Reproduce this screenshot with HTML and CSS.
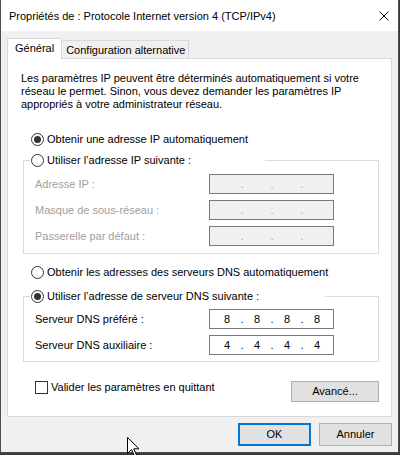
FILE: index.html
```html
<!doctype html>
<html lang="fr">
<head>
  <meta charset="UTF-8" />
  <meta name="viewport" content="width=device-width, initial-scale=1.0" />
  <title>Propriétés de : Protocole Internet version 4 (TCP/IPv4)</title>
  <link rel="stylesheet" href="styles.css">
</head>
<body>
  <div class="window">
    <header class="titlebar">
      <span class="title">Propriétés de : Protocole Internet version 4 (TCP/IPv4)</span>
      <svg class="close" width="10" height="10" viewBox="0 0 10 10">
        <path d="M0.5 0.5 L9.5 9.5 M9.5 0.5 L0.5 9.5" stroke="#000" stroke-width="1" fill="none" />
      </svg>
    </header>

    <div class="content">
      <nav class="tabs">
        <div class="tab active">Général</div>
        <div class="tab">Configuration alternative</div>
      </nav>

      <section class="panel">
        <p class="intro">
          Les paramètres IP peuvent être déterminés automatiquement si votre<br>
          réseau le permet. Sinon, vous devez demander les paramètres IP<br>
          appropriés à votre administrateur réseau.
        </p>

        <label class="radio first checked"><span class="circle"></span>Obtenir une adresse IP automatiquement</label>

        <fieldset class="group ip-group">
          <legend class="legend-ip">
            <label class="radio"><span class="circle"></span>Utiliser l’adresse IP suivante :</label>
          </legend>
          <div class="field disabled">
            <span class="label">Adresse IP :</span>
            <div class="ip">
              <span class="seg"></span><span class="dot">.</span><span class="seg"></span><span class="dot">.</span><span class="seg"></span><span class="dot">.</span><span class="seg"></span>
            </div>
          </div>
          <div class="field disabled">
            <span class="label">Masque de sous-réseau :</span>
            <div class="ip">
              <span class="seg"></span><span class="dot">.</span><span class="seg"></span><span class="dot">.</span><span class="seg"></span><span class="dot">.</span><span class="seg"></span>
            </div>
          </div>
          <div class="field disabled">
            <span class="label">Passerelle par défaut :</span>
            <div class="ip">
              <span class="seg"></span><span class="dot">.</span><span class="seg"></span><span class="dot">.</span><span class="seg"></span><span class="dot">.</span><span class="seg"></span>
            </div>
          </div>
        </fieldset>

        <label class="radio dns-auto"><span class="circle"></span>Obtenir les adresses des serveurs DNS automatiquement</label>

        <fieldset class="group dns-group">
          <legend class="legend-dns">
            <label class="radio checked"><span class="circle"></span>Utiliser l’adresse de serveur DNS suivante :</label>
          </legend>
          <div class="field">
            <span class="label">Serveur DNS préféré :</span>
            <div class="ip">
              <span class="seg">8</span><span class="dot">.</span><span class="seg">8</span><span class="dot">.</span><span class="seg">8</span><span class="dot">.</span><span class="seg">8</span>
            </div>
          </div>
          <div class="field">
            <span class="label">Serveur DNS auxiliaire :</span>
            <div class="ip">
              <span class="seg">4</span><span class="dot">.</span><span class="seg">4</span><span class="dot">.</span><span class="seg">4</span><span class="dot">.</span><span class="seg">4</span>
            </div>
          </div>
        </fieldset>

        <div class="options">
          <label class="check"><span class="box"></span>Valider les paramètres en quittant</label>
          <button class="btn advanced">Avancé...</button>
        </div>
      </section>

      <div class="actions">
        <button class="btn default">OK</button>
        <button class="btn">Annuler</button>
      </div>
    </div>
  </div>

  <!-- pointeur de la souris -->
  <svg class="cursor" width="13" height="20" viewBox="0 0 13 20">
    <path d="M0.5 0.5 L0.5 16.5 L4.5 12.5 L7.5 19 L9.5 18 L6.8 11.8 L12 11.8 Z" fill="#fff" stroke="#000" stroke-width="1" stroke-linejoin="miter" />
  </svg>
</body>
</html>
```

FILE: styles.css
```css
* {
  margin: 0;
  padding: 0;
  box-sizing: border-box;
}

html, body {
  width: 400px;
  height: 455px;
  overflow: hidden;
}

body {
  font-family: "Liberation Sans", Arial, sans-serif;
  font-size: 11px;
  line-height: 13px;
  color: #000;
  background-color: #3a3a3a;
  position: relative;
}

.window {
  width: 399px;
  border: 1px solid #4d4d4d;
  border-top: none;
  background-color: #f0f0f0;
}

.titlebar {
  height: 31px;
  background-color: #fff;
  display: flex;
  align-items: center;
  justify-content: space-between;
  padding: 1px 8px 0 8px;
}

.close {
  display: block;
  margin-right: 1px;
}

.content {
  padding: 7px 6px 6px 6px;
}

.tabs {
  display: flex;
  align-items: flex-end;
  height: 20px;
}

.tab {
  border: 1px solid #d9d9d9;
  border-bottom: none;
  background-color: #f0f0f0;
  height: 18px;
  padding: 3px 3px 1px 4px;
  margin-bottom: 0;
}

.tab.active {
  position: relative;
  z-index: 1;
  background-color: #fff;
  height: 21px;
  padding: 3px 7px 4px 7px;
  margin-bottom: -1px;
  border-right: 1px solid #d9d9d9;
}

.tab.active + .tab {
  border-left: none;
}

.panel {
  height: 359px;
  background-color: #fff;
  border: 1px solid #d9d9d9;
  display: flex;
  flex-direction: column;
}

.intro {
  margin: 13px 0 0 13px;
}

.radio {
  display: flex;
  align-items: center;
  height: 16px;
  gap: 3px;
  white-space: nowrap;
}

.radio.first {
  margin: 20px 0 0 23px;
}

.radio.dns-auto {
  margin: 10px 0 0 23px;
}

.circle {
  width: 13px;
  height: 13px;
  border: 1px solid #333;
  border-radius: 50%;
  background-color: #fff;
  display: flex;
  align-items: center;
  justify-content: center;
  flex-shrink: 0;
}

.radio.checked .circle::after {
  content: "";
  width: 7px;
  height: 7px;
  border-radius: 50%;
  background-color: #333;
}

.group {
  border: 1px solid #dcdcdc;
  margin: 5px 12px 0 15px;
  padding: 6px 0 7px 0;
  min-width: 0;
}

.dns-group {
  margin-top: 8px;
  padding: 5px 0 6px 0;
}

.group legend {
  margin-left: 6px;
  padding: 0 0 0 1px;
  height: 16px;
}

.legend-ip {
  width: 235px;
}

.legend-dns {
  width: 295px;
}

.field {
  display: flex;
  align-items: center;
  height: 20px;
  padding-left: 11px;
}

.field + .field {
  margin-top: 6px;
}

.field .label {
  width: 174px;
}

.ip {
  width: 125px;
  height: 20px;
  border: 1px solid #7a7a7a;
  background-color: #fff;
  display: flex;
  align-items: center;
  padding-left: 6px;
}

.seg {
  width: 22px;
  text-align: center;
}

.dot {
  width: 8px;
  text-align: center;
}

.field.disabled {
  color: #a0a0a0;
}

.field.disabled .ip {
  background-color: #f0f0f0;
}

.options {
  display: flex;
  justify-content: space-between;
  align-items: flex-start;
  margin: 19px 12px 0 27px;
}

.check {
  display: flex;
  align-items: center;
  gap: 3px;
  height: 13px;
}

.box {
  width: 13px;
  height: 13px;
  border: 1px solid #333;
  background-color: #fff;
}

.btn {
  font-family: inherit;
  font-size: 11px;
  line-height: 13px;
  color: #000;
  background-color: #e1e1e1;
  border: 1px solid #adadad;
  width: 73px;
  height: 23px;
  text-align: center;
}

.btn.advanced {
  width: 88px;
  height: 21px;
}

.btn.default {
  border: 2px solid #0078d7;
}

.actions {
  display: flex;
  justify-content: flex-end;
  gap: 8px;
  margin-top: 6px;
}

.cursor {
  position: absolute;
  left: 127px;
  top: 437px;
}
```
